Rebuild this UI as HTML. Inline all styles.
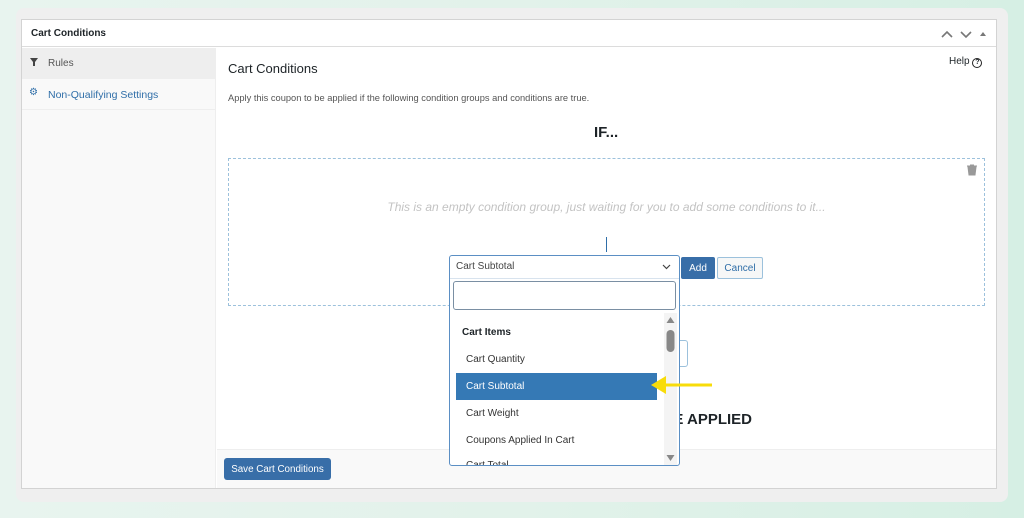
<!DOCTYPE html>
<html><head><style>
*{margin:0;padding:0;box-sizing:border-box}
body{width:1024px;height:518px;overflow:hidden;background:linear-gradient(90deg,#e8f4ef,#e2f2ea 50%,#d6efe4);font-family:"Liberation Sans",sans-serif;position:relative;color:#1d2327}
.a{position:absolute}
.b{display:flex;align-items:center;justify-content:center}
</style></head><body>
<div class="a" style="left:16px;top:8px;width:992px;height:494px;background:#efefef;border-radius:8px"></div>
<div class="a" style="left:21px;top:19px;width:976px;height:470px;background:#fff;border:1px solid #d3d3d3"></div>
<div class="a" style="left:22px;top:20px;width:974px;height:27px;border-bottom:1px solid #dcdcdc"></div>
<div class="a" style="left:31px;top:28px;font-size:10px;font-weight:bold">Cart Conditions</div>
<svg class="a" style="left:940px;top:28px" width="50" height="12"><path d="M2 9l5-5 5 5M21 4l5 5 5-5" stroke="#777" stroke-width="1.6" fill="none"/><path d="M40 8l3-4 3 4z" fill="#777"/></svg>
<div class="a" style="left:22px;top:48px;width:194px;height:440px;background:#f9f9f9;border-right:1px solid #eee"></div>
<div class="a" style="left:22px;top:48px;width:194px;height:31px;background:#eee"></div>
<div class="a" style="left:22px;top:109px;width:194px;height:1px;background:#eee"></div>
<svg class="a" style="left:30px;top:58px" width="8" height="8"><path d="M0 0h8L5 4v4H3V4z" fill="#444"/></svg>
<div class="a" style="left:48px;top:58px;font-size:10px;color:#555">Rules</div>
<div class="a" style="left:29px;top:87px;font-size:10px;color:#2f6ea8">&#9881;</div>
<div class="a" style="left:48px;top:89px;font-size:10.5px;color:#2f6ea8">Non-Qualifying Settings</div>
<div class="a" style="left:228px;top:61px;font-size:13px;">Cart Conditions</div>
<div class="a" style="left:949px;top:56px;font-size:10px;">Help <span style="display:inline-block;width:10px;height:10px;border:1.3px solid #222;border-radius:50%;font-size:7px;text-align:center;line-height:8px;font-weight:bold">?</span></div>
<div class="a" style="left:228px;top:93px;font-size:9.3px;color:#555">Apply this coupon to be applied if the following condition groups and conditions are true.</div>
<div class="a" style="left:594px;top:124px;font-size:15px;font-weight:bold">IF...</div>
<div class="a" style="left:228px;top:158px;width:757px;height:148px;border:1px dashed #9cc1dc"></div>
<svg class="a" style="left:967px;top:164px" width="10" height="12"><path d="M0 2h10M3 1h4M1 3h8l-1 8H2z" stroke="#999" fill="#999" stroke-width="1"/></svg>
<div class="a" style="left:228px;top:200px;width:757px;text-align:center;font-size:12px;font-style:italic;color:#c3c3c3">This is an empty condition group, just waiting for you to add some conditions to it...</div>
<div class="a" style="left:606px;top:237px;width:1px;height:15px;background:#2f6ea8"></div>
<div class="a" style="left:678px;top:340px;width:10px;height:27px;border:1px solid #9cc1dc;border-left:none;border-radius:0 3px 3px 0"></div>
<div class="a" style="right:272px;top:411px;font-size:15px;font-weight:bold;white-space:nowrap">TO BE APPLIED</div>
<div class="a" style="left:217px;top:449px;width:779px;height:39px;background:#f9f9f9;border-top:1px solid #eee"></div>
<div class="a b" style="left:224px;top:458px;width:107px;height:22px;background:#386ea8;border-radius:3px;color:#fff;font-size:9.8px">Save Cart Conditions</div>
<div class="a b" style="left:681px;top:257px;width:34px;height:22px;background:#386ea8;border-radius:2px;color:#fff;font-size:10px">Add</div>
<div class="a b" style="left:717px;top:257px;width:46px;height:22px;background:#f6f7f7;border:1px solid #9cc1dc;border-radius:2px;color:#2f6ea8;font-size:10px">Cancel</div>
<div class="a" style="left:449px;top:255px;width:231px;height:211px;background:#fff;border:1px solid #5b8fc4;border-radius:3px;overflow:hidden">
<div class="a" style="left:16px;top:204px;font-size:10px;color:#333">Cart Total</div>
</div>
<div class="a" style="left:450px;top:278px;width:229px;height:1px;background:#d8e3ee"></div>
<div class="a" style="left:456px;top:261px;font-size:10px;color:#444">Cart Subtotal</div>
<svg class="a" style="left:662px;top:264px" width="9" height="6"><path d="M1 1l3.5 3.5L8 1" stroke="#444" stroke-width="1.2" fill="none"/></svg>
<div class="a" style="left:453px;top:281px;width:223px;height:29px;border:1px solid #7a8fa3;border-radius:3px"></div>
<div class="a" style="left:462px;top:327px;font-size:10px;font-weight:bold">Cart Items</div>
<div class="a" style="left:466px;top:354px;font-size:10px;color:#333">Cart Quantity</div>
<div class="a" style="left:456px;top:373px;width:201px;height:27px;background:#3579b5"></div>
<div class="a" style="left:466px;top:381px;font-size:10px;color:#fff">Cart Subtotal</div>
<div class="a" style="left:466px;top:408px;font-size:10px;color:#333">Cart Weight</div>
<div class="a" style="left:466px;top:435px;font-size:10px;color:#333">Coupons Applied In Cart</div>
<div class="a" style="left:664px;top:313px;width:13px;height:152px;background:#f4f4f4"></div>
<svg class="a" style="left:666px;top:316px" width="9" height="148"><path d="M0.5 7l4-6 4 6z M0.5 139h8l-4 6z" fill="#888"/><rect x="0.5" y="14" width="8" height="22" rx="4" fill="#888"/></svg>
<svg class="a" style="left:648px;top:375px" width="66" height="20"><path d="M15 10H64" stroke="#f8dc0a" stroke-width="3"/><path d="M3 10l15-9v18z" fill="#f8dc0a"/></svg>
</body></html>
